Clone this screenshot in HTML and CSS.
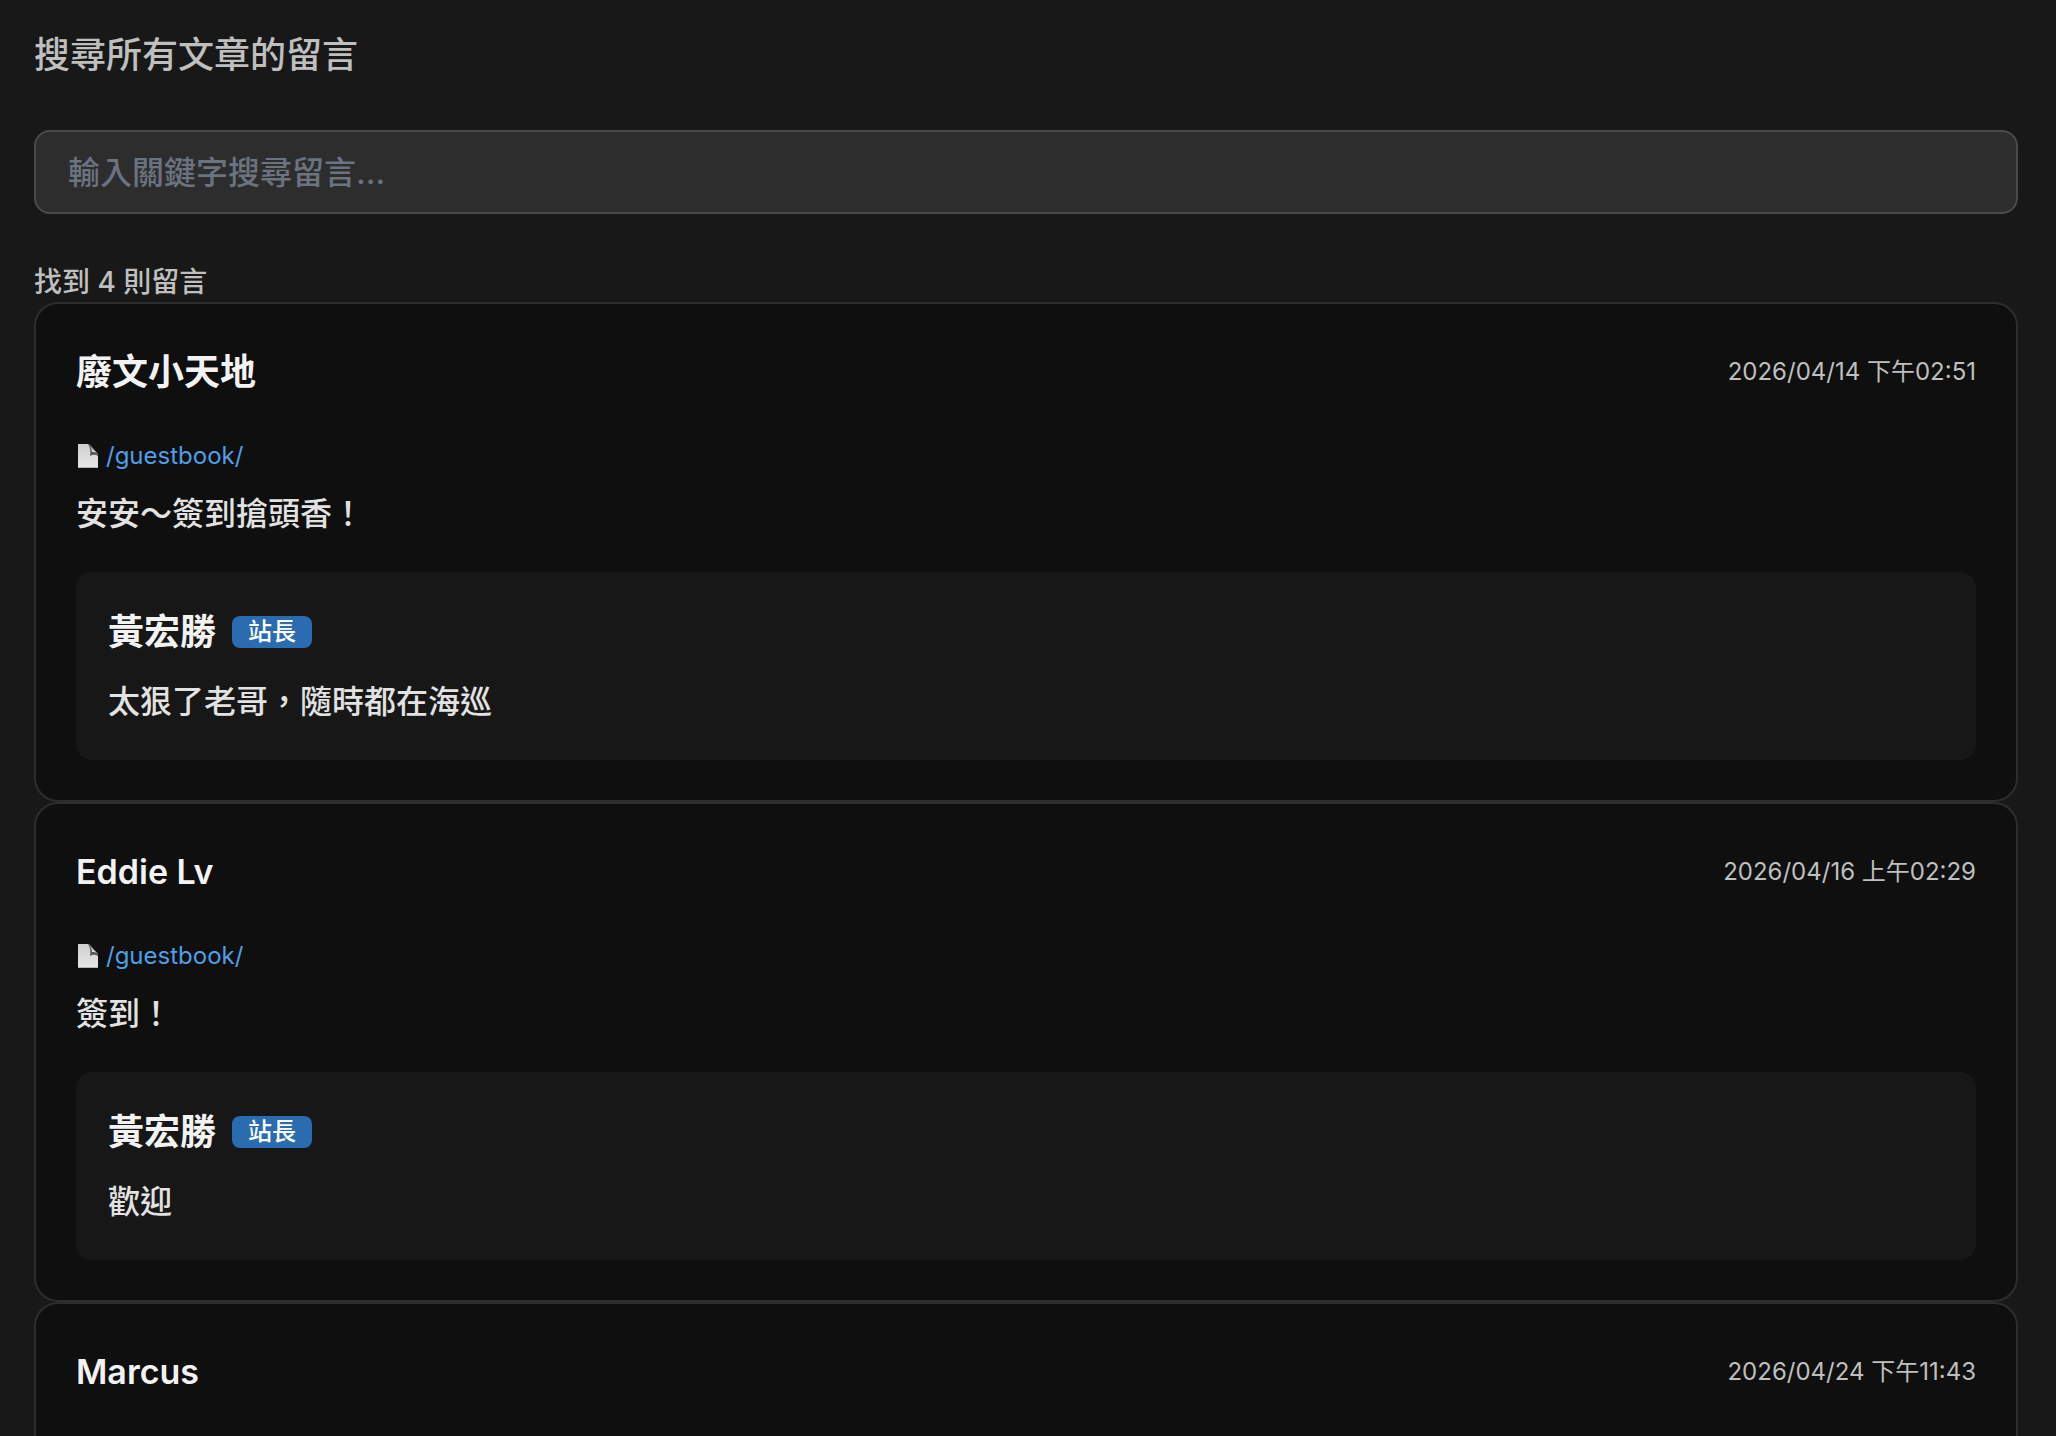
FILE: index.html
```
<!DOCTYPE html>
<html lang="zh-Hant">
<head>
    <meta charset="UTF-8">
    <meta name="viewport" content="width=device-width, initial-scale=1.0">
    <title>搜尋留言</title>
    <link rel="stylesheet" href="styles.css">
</head>
<body>
    <svg class="sprite" aria-hidden="true">
        <linearGradient id="paper" x1="0" y1="0" x2="0" y2="1">
            <stop offset="0" stop-color="#cfcfcf"/>
            <stop offset="1" stop-color="#e6e6e6"/>
        </linearGradient>
        <linearGradient id="fold" x1="0" y1="1" x2="1" y2="0">
            <stop offset="0" stop-color="#ffffff"/>
            <stop offset="1" stop-color="#8a8a8a"/>
        </linearGradient>
        <symbol id="page-icon" viewBox="0 0 24 26">
            <path d="M2 1H13L22 11V25H2Z" fill="url(#paper)"/>
            <path d="M12 1C14 4 15 8 14 13C17 11 20 12 22 13V11L13 1Z" fill="#555"/>
            <path d="M14 3C15 5 16 7 16 9C18 9 20 9 21 10Z" fill="url(#fold)"/>
            <path d="M2 24H22V25H2Z" fill="#b5b5b5"/>
        </symbol>
    </svg>

    <main class="search-page">
        <label class="search-label" for="keyword">搜尋所有文章的留言</label>
        <input class="search-input" type="text" id="keyword" placeholder="輸入關鍵字搜尋留言...">
        <p class="result-count">找到 4 則留言</p>

        <article class="comment">
            <header class="comment-header">
                <h2 class="author">廢文小天地</h2>
                <time class="date" datetime="2026-04-14T14:51">2026/04/14 下午02:51</time>
            </header>
            <p class="source"><svg class="page-icon" aria-hidden="true"><use href="#page-icon"/></svg><a href="/guestbook/">/guestbook/</a></p>
            <p class="content">安安～簽到搶頭香！</p>
            <div class="reply">
                <div class="reply-header">
                    <h3 class="author">黃宏勝</h3>
                    <span class="badge">站長</span>
                </div>
                <p class="reply-content">太狠了老哥，隨時都在海巡</p>
            </div>
        </article>

        <article class="comment">
            <header class="comment-header">
                <h2 class="author" lang="en">Eddie Lv</h2>
                <time class="date" datetime="2026-04-16T02:29">2026/04/16 上午02:29</time>
            </header>
            <p class="source"><svg class="page-icon" aria-hidden="true"><use href="#page-icon"/></svg><a href="/guestbook/">/guestbook/</a></p>
            <p class="content">簽到！</p>
            <div class="reply">
                <div class="reply-header">
                    <h3 class="author">黃宏勝</h3>
                    <span class="badge">站長</span>
                </div>
                <p class="reply-content">歡迎</p>
            </div>
        </article>

        <article class="comment">
            <header class="comment-header">
                <h2 class="author" lang="en">Marcus</h2>
                <time class="date" datetime="2026-04-24T23:43">2026/04/24 下午11:43</time>
            </header>
        </article>
    </main>
</body>
</html>
```
FILE: styles.css
```
* {
    box-sizing: border-box;
}
body {
    margin: 0;
    background-color: #181818;
    color: #e2e2e2;
    font-family: Inter, "Noto Sans CJK TC", sans-serif;
    font-size: 32px;
    line-height: 56px;
}
h2, h3, p {
    margin: 0;
}
.sprite {
    display: block;
    width: 0;
    height: 0;
}
.search-page {
    padding: 28px 38px 40px 34px;
}
.search-label {
    display: block;
    margin-bottom: 48px;
    color: #bfbfbf;
    font-size: 36px;
    font-weight: 500;
    line-height: 54px;
}
.search-input {
    display: block;
    width: 100%;
    height: 84px;
    padding: 0 32px;
    border: 2px solid #4a4a4a;
    border-radius: 16px;
    background-color: #2d2d2d;
    color: #e2e2e2;
    font-family: inherit;
    font-size: 32px;
    font-weight: 500;
}
.search-input::placeholder {
    color: #6b7280;
}
.search-input:focus {
    outline: none;
    border-color: #4f9fe6;
}
.result-count {
    margin-top: 48px;
    color: #bfbfbf;
    font-size: 28px;
    font-weight: 500;
    line-height: 40px;
}
.comment {
    padding: 40px;
    border: 2px solid #2d2d2d;
    border-radius: 24px;
    background-color: #0f0f0f;
}
.comment-header {
    display: flex;
    justify-content: space-between;
    align-items: center;
    margin-bottom: 32px;
}
.author {
    color: #f2f2f2;
    font-size: 36px;
    font-weight: 600;
}
.author:lang(en) {
    font-size: 34px;
}
.date {
    color: #bfbfbf;
    font-size: 24px;
}
.source {
    display: flex;
    align-items: center;
    gap: 6px;
    margin-bottom: 6px;
    font-size: 24px;
    line-height: 48px;
}
.source a {
    color: #4f9fe6;
    text-decoration: none;
}
.source a:hover {
    text-decoration: underline;
}
.page-icon {
    width: 24px;
    height: 26px;
}
.content {
    margin-bottom: 30px;
    font-weight: 500;
}
.reply {
    padding: 32px 32px 30px;
    border-radius: 16px;
    background-color: #171717;
}
.reply-header {
    display: flex;
    align-items: center;
    gap: 16px;
    margin-bottom: 14px;
}
.reply-content {
    font-weight: 500;
}
.badge {
    padding: 0 16px;
    border-radius: 8px;
    background-color: #2b6cb0;
    color: #fff;
    font-size: 24px;
    font-weight: 500;
    line-height: 32px;
}
```
